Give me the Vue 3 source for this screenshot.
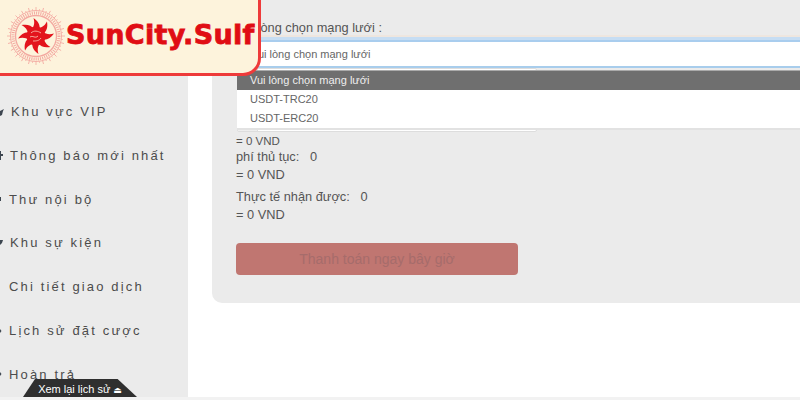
<script setup>
const menu = [
  { label: 'Khu vực VIP', gap: 3, icon: 'M0 7 L4 5 L3 7 L2 11 L0 12 Z' },
  { label: 'Thông báo mới nhất', gap: 2, icon: 'M0 3 H1 V6 H3 V8 H1 V12 H0 Z' },
  { label: 'Thư nội bộ', gap: 1, icon: 'M0 5 H1 V9 H0 Z' },
  { label: 'Khu sự kiện', gap: 2, icon: 'M0 4 H3 L2 7 L0 9 Z' },
  { label: 'Chi tiết giao dịch', gap: 1, icon: '' },
  { label: 'Lịch sử đặt cược', gap: 1, icon: 'M0 5 L1.5 7 L0 9 Z' },
  { label: 'Hoàn trả', gap: 1, icon: 'M0 5 L1.5 7 L0 9 Z' }
]
const flames = [0, 45, 90, 135, 180, 225, 270, 315]
const ticks = Array.from({ length: 48 }, (_, i) => i * 7.5)
const options = ['USDT-TRC20', 'USDT-ERC20']
</script>

<template>
  <div class="page">
    <aside class="sidebar">
      <div v-for="item in menu" :key="item.label" class="menu-item">
        <svg class="menu-icon" viewBox="0 0 8 14" width="8" height="14" :style="{ marginRight: item.gap + 'px' }">
          <path v-if="item.icon" :d="item.icon" fill="#3d4650" />
        </svg>
        <span>{{ item.label }}</span>
      </div>
    </aside>

    <main class="main">
      <section class="panel">
        <label class="field-label">Vui lòng chọn mạng lưới :</label>
        <div class="select-wrap">
          <div class="select">Vui lòng chọn mạng lưới</div>
          <ul class="dropdown">
            <li class="selected">Vui lòng chọn mạng lưới</li>
            <li v-for="o in options" :key="o">{{ o }}</li>
          </ul>
        </div>
        <div class="amount-input"><span class="addon"></span></div>
        <p class="small-line">= 0 VND</p>
        <p class="line">phí thủ tục: &nbsp; 0</p>
        <p class="line">= 0 VND</p>
        <p class="line actual">Thực tế nhận được: &nbsp; 0</p>
        <p class="line">= 0 VND</p>
        <button class="pay" type="button">Thanh toán ngay bây giờ</button>
      </section>
    </main>

    <div class="logo">
      <svg class="sun" viewBox="0 0 66 66" width="66" height="66">
        <g fill="none" stroke="#f3a8a0">
          <circle cx="33" cy="33" r="25.5" stroke-width=".9" />
          <circle cx="33" cy="33" r="20.5" stroke-width="1.3" />
          <circle cx="33" cy="33" r="23" stroke-width="3" stroke-dasharray="1 1.2" />
          <line v-for="t in ticks" :key="t" x1="33" y1="7.5" x2="33" :y2="t % 15 === 0 ? 4 : 6" stroke-width=".8" :transform="`rotate(${t} 33 33)`" />
        </g>
        <g fill="#e3141c">
          <path v-for="f in flames" :key="f" d="M29 26 C31 23 32 20 30.5 15 C35 18 37.500 22 36.500 27 Z" :transform="`rotate(${f} 33 33)`" />
          <circle cx="33" cy="33" r="9.500" />
        </g>
        <g fill="none" stroke="#f7b9a8" stroke-width=".9">
          <path d="M28 30 C31 27 35 28 38 30 M27 34 C30 32 32 36 35 33 M30 38 C33 38 36 38 38 35" />
        </g>
      </svg>
      <span class="brand">SunCity.Sulf</span>
    </div>

    <div class="history-tab">Xem lại lịch sử <span class="eject">⏏</span></div>
    <div class="bottom-line"></div>
  </div>
</template>

<style>
html, body { margin: 0; background: #fff; }
</style>

<style scoped>
.page {
  position: relative;
  display: flex;
  width: 800px;
  height: 400px;
  overflow: hidden;
  background: #fff;
  font-family: "Liberation Sans", Arial, sans-serif;
  color: #555;
}
.sidebar {
  display: flex;
  flex-direction: column;
  flex: none;
  width: 188px;
  height: 400px;
  padding-top: 89.5px;
  box-sizing: border-box;
  background: #ebebeb;
}
.menu-item {
  display: flex;
  flex: none;
  align-items: center;
  height: 43.85px;
  font-size: 13px;
  letter-spacing: 2.15px;
  color: #4c4c4c;
  white-space: nowrap;
}
.menu-icon { flex: none; overflow: hidden; }
.main { flex: 1; padding-left: 24px; min-width: 0; }
.panel {
  display: flex;
  flex-direction: column;
  align-items: flex-start;
  height: 303px;
  padding: 20px 0 0 24px;
  box-sizing: border-box;
  background: #ebebeb;
  border-bottom-left-radius: 10px;
}
.field-label { font-size: 12.8px; line-height: 15px; height: 20px; color: #555; }
.select-wrap { position: relative; width: 564px; }
.select {
  height: 28px;
  box-sizing: border-box;
  padding-left: 14px;
  margin-left: 1px;
  background: #fff;
  border-top: 2px solid #a9cdee;
  border-bottom: 2px solid #a8cdec;
  box-shadow: 0 -3px 0 #c6ddf3, 0 -5px 0 #eee6df;
  font-size: 11px;
  line-height: 24px;
  color: #666;
}
.dropdown {
  position: absolute;
  left: 1px;
  right: 0;
  top: 31px;
  z-index: 2;
  margin: 0;
  padding: 0;
  list-style: none;
  background: #fff;
  border-bottom: 2px solid #e2e2e2;
  font-size: 11px;
}
.dropdown li { height: 19px; line-height: 19px; padding-left: 13px; color: #666; }
.dropdown .selected { background: #6f6f6f; color: #eee; box-shadow: 0 -1px 0 #aaa; }
.amount-input {
  display: flex;
  width: 300px;
  height: 64px;
  margin-left: 1px;
  box-sizing: border-box;
  background: #fff;
  border: 1px solid #ddd;
  border-radius: 2px;
}
.addon { width: 19px; background: #eee; border-right: 1px solid #ddd; }
.small-line { margin: 3px 0 0; font-size: 11.5px; line-height: 13px; color: #555; }
.line { margin: 0; font-size: 12.8px; line-height: 18px; color: #555; }
.actual { margin-top: 4px; }
.pay {
  width: 282px;
  height: 32px;
  margin-top: 19px;
  padding: 0;
  border: 0;
  border-radius: 4px;
  background: #c07671;
  color: #a66c6b;
  font: 14px "Liberation Sans", Arial, sans-serif;
}
.logo {
  position: absolute;
  left: -3px;
  top: -3px;
  z-index: 5;
  display: flex;
  align-items: flex-start;
  width: 264px;
  height: 79px;
  box-sizing: border-box;
  padding: 3px 0 0 3px;
  background: #fdf3dc;
  border: 3px solid #ee3a3a;
  border-bottom-right-radius: 18px;
}
.sun { flex: none; }
.brand {
  margin: 16px 0 0 -3px;
  font-family: "DejaVu Sans", sans-serif;
  font-weight: 700;
  font-size: 27px;
  line-height: 32px;
  letter-spacing: .3px;
  color: #e00d14;
  -webkit-text-stroke: .8px #e00d14;
  white-space: nowrap;
}
.history-tab {
  position: absolute;
  left: 23px;
  top: 379px;
  z-index: 3;
  width: 114px;
  height: 18px;
  background: #2f2f2f;
  clip-path: polygon(10.5% 0, 83% 0, 100% 100%, 0 100%);
  color: #fff;
  font-size: 11px;
  line-height: 20px;
  text-align: center;
  white-space: nowrap;
}
.eject { font-size: 9px; font-family: "DejaVu Sans", sans-serif; }
.bottom-line {
  position: absolute;
  left: 0;
  right: 0;
  bottom: 0;
  height: 3px;
  background: #f2f2f2;
}
</style>
